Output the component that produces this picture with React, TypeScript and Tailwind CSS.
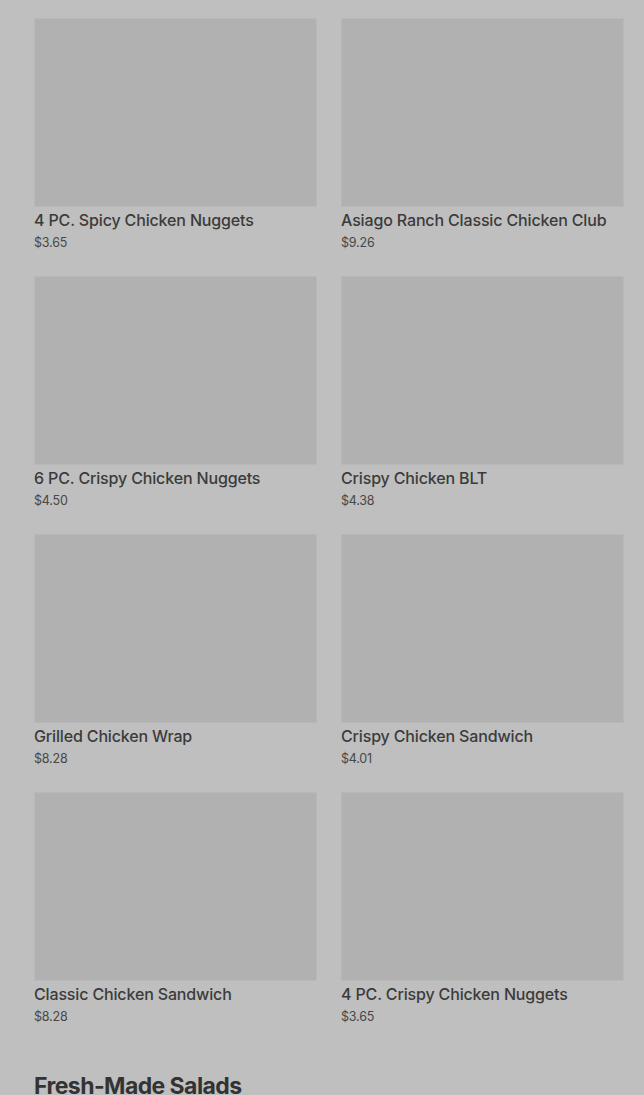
import React from "react";

const items = [
  { name: "4 PC. Spicy Chicken Nuggets", price: "$3.65" },
  { name: "Asiago Ranch Classic Chicken Club", price: "$9.26" },
  { name: "6 PC. Crispy Chicken Nuggets", price: "$4.50" },
  { name: "Crispy Chicken BLT", price: "$4.38" },
  { name: "Grilled Chicken Wrap", price: "$8.28" },
  { name: "Crispy Chicken Sandwich", price: "$4.01" },
  { name: "Classic Chicken Sandwich", price: "$8.28" },
  { name: "4 PC. Crispy Chicken Nuggets", price: "$3.65" },
];

export default function App() {
  return (
    <div
      className="min-h-[1095px] bg-[#bfbfbf] pl-[34px] pr-[20px] pt-[18px]"
      style={{ fontFamily: "Inter, 'Noto Sans', sans-serif" }}
    >
      <div className="grid grid-cols-2 gap-x-6 gap-y-[23px]">
        {items.map((it, i) => (
          <div key={i} className="flex flex-col">
            <div className="h-[189px] border border-[#b8b8b8] bg-[#b1b1b1]" />
            <div className="mt-[1px] text-[16px] font-medium leading-6 tracking-[-0.15px] text-[#3b3b3b]">
              {it.name}
            </div>
            <div className="mt-[1px] text-[12.5px] leading-5 tracking-[-0.2px] text-[#474747]">{it.price}</div>
          </div>
        ))}
      </div>
      <h2 className="mt-[43px] text-[23px] font-bold leading-8 tracking-tight text-[#333333]">
        Fresh-Made Salads
      </h2>
    </div>
  );
}
